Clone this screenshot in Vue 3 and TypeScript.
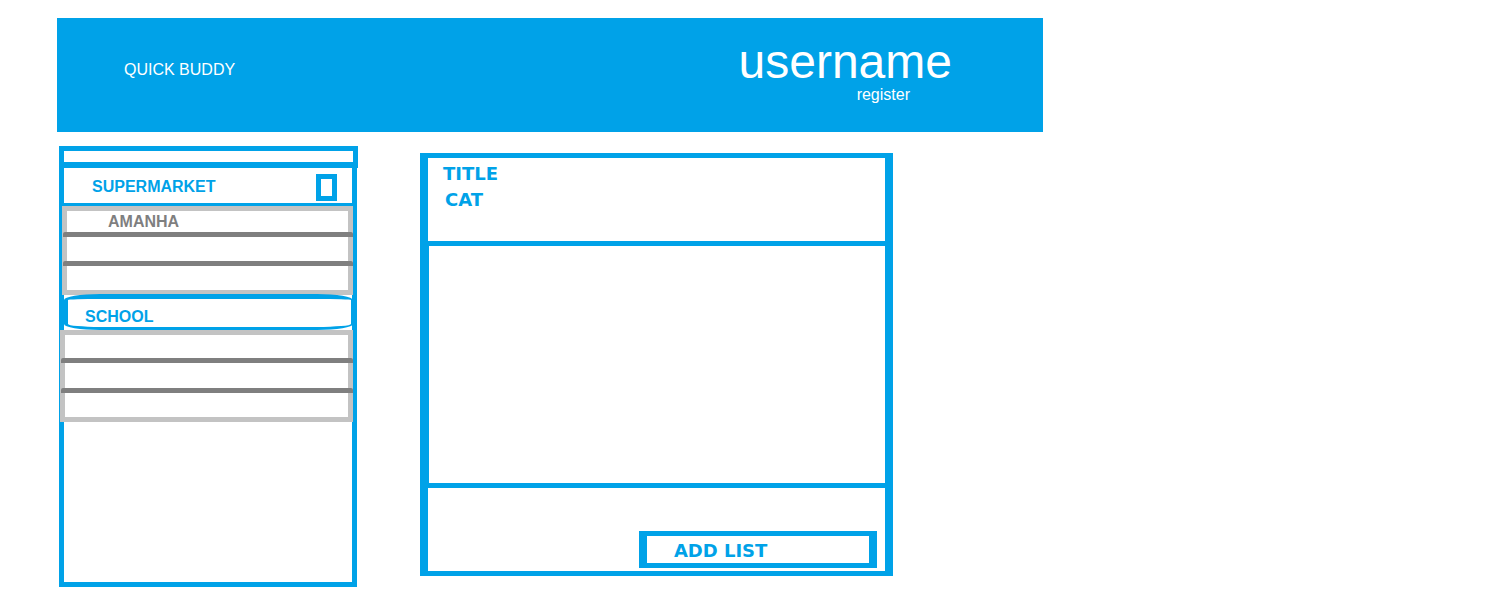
<script setup lang="ts">
import { ref } from 'vue'

interface Group {
  id: string
  name: string
  items: string[]
}

const query = ref('')
const selected = ref(false)

const groups: Group[] = [
  { id: 'supermarket', name: 'SUPERMARKET', items: ['AMANHA', '', ''] },
  { id: 'school', name: 'SCHOOL', items: ['', '', ''] },
]
</script>

<template>
  <div class="page">
    <header class="banner">
      <span class="brand">QUICK BUDDY</span>
      <div class="account">
        <span class="username">username</span>
        <a class="register" href="#register">register</a>
      </div>
    </header>

    <div class="columns">
      <aside class="sidebar">
        <div class="search">
          <input v-model="query" type="text" aria-label="Search lists" />
        </div>
        <section v-for="group in groups" :key="group.id" :class="['group', group.id]">
          <div class="group-head">
            <h2>{{ group.name }}</h2>
            <input
              v-if="group.id === 'supermarket'"
              v-model="selected"
              type="checkbox"
              :aria-label="group.name"
            />
          </div>
          <ul>
            <li v-for="(item, i) in group.items" :key="i">{{ item }}</li>
          </ul>
        </section>
      </aside>

      <main class="panel">
        <div class="panel-head">
          <h1>TITLE</h1>
          <p>CAT</p>
        </div>
        <div class="panel-body"></div>
        <div class="panel-foot">
          <button type="button">ADD LIST</button>
        </div>
      </main>
    </div>
  </div>
</template>

<style>
body {
  background: #fff;
}
</style>

<style scoped>
.page,
.page * {
  box-sizing: border-box;
}

.page {
  --blue: #00a2e8;
  --light: #c3c3c3;
  --dark: #7f7f7f;
  max-width: 1043px;
  padding: 18px 0 28px 57px;
  font: 16px/20px 'Liberation Sans', Arial, sans-serif;
}

h1,
h2,
p,
ul {
  margin: 0;
  padding: 0;
  font: inherit;
}

.banner {
  display: flex;
  justify-content: space-between;
  min-height: 114px;
  padding: 21px 91px 0 67px;
  background: var(--blue);
  color: #fff;
}

.brand {
  padding-top: 21px;
}

.account {
  display: flex;
  flex-direction: column;
  align-items: flex-end;
}

.username {
  font-size: 48px;
  line-height: 46px;
}

.register {
  padding-right: 42px;
  color: inherit;
  text-decoration: none;
}

.columns {
  display: grid;
  grid-template-columns: 298fr 473fr;
  gap: 63px;
  align-items: start;
  padding: 14px 150px 0 2px;
}

.sidebar {
  min-height: 441px;
  border: 5px solid var(--blue);
  font-weight: bold;
}

.search {
  margin: -5px -6px 0 -5px;
}

.search input {
  display: block;
  width: 100%;
  height: 22px;
  padding: 0 4px;
  border: 5px solid var(--blue);
  border-bottom-width: 6px;
  border-radius: 0;
  outline: none;
  background: #fff;
  color: var(--blue);
  font: 10px/11px 'Liberation Sans', Arial, sans-serif;
}

.group-head {
  display: flex;
  justify-content: space-between;
  align-items: center;
  min-height: 38px;
  padding: 3px 15px 0 28px;
  border-bottom: 3px solid var(--blue);
  color: var(--blue);
}

.group-head input {
  appearance: none;
  width: 21px;
  height: 27px;
  margin: 1px 0 0;
  border: 5px solid var(--blue);
}

.group-head input:checked {
  background: var(--light);
}

.school .group-head {
  position: relative;
  min-height: 36px;
  margin: -1px -1px 0 0;
  padding: 8px 15px 0 17px;
  border: solid var(--blue);
  border-width: 5px 2px 3px 4px;
  border-radius: 36px / 6px;
}

.group ul {
  margin: 0 -1px 0 -2px;
  border: 5px solid var(--light);
  list-style: none;
  color: var(--dark);
}

.group li {
  min-height: 29px;
  margin: 0 -5px 0 -4px;
  padding-left: 45px;
  border-top: 5px solid var(--dark);
  border-radius: 2px;
  line-height: 21px;
}

.group li:first-child {
  min-height: 21px;
  border-top: 0;
}

.school ul {
  margin-left: -4px;
}

.school li:nth-child(2) {
  min-height: 30px;
}

.school li:first-child {
  min-height: 23px;
}

.panel {
  margin-top: 7px;
  border: solid var(--blue);
  border-width: 5px 8px;
  color: var(--blue);
  font: bold 18px/26px 'DejaVu Sans', Verdana, sans-serif;
}

.panel-head {
  min-height: 83px;
  padding: 3px 15px;
}

.panel-head p {
  padding-left: 2px;
}

.panel-body {
  min-height: 247px;
  border: solid var(--blue);
  border-width: 5px 0 5px 1px;
}

.panel-foot {
  display: flex;
  justify-content: flex-end;
  align-items: flex-end;
  min-height: 83px;
  padding: 0 8px 3px;
}

.panel-foot button {
  width: 54%;
  min-height: 37px;
  padding: 2px 0 0 27px;
  border: solid var(--blue);
  border-width: 5px 8px;
  background: #fff;
  color: inherit;
  font: inherit;
  line-height: 24px;
  text-align: left;
  cursor: pointer;
}
</style>
